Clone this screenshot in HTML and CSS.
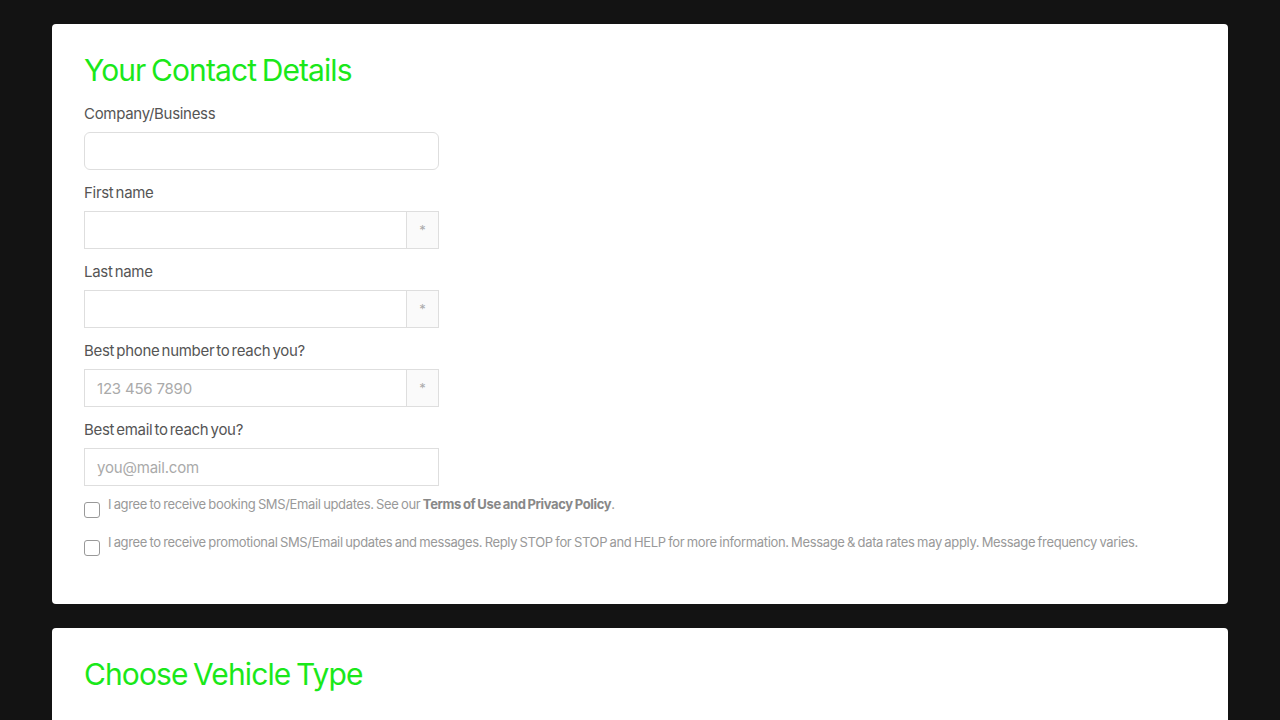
FILE: index.html
```html
<!DOCTYPE html>
<html lang="en">
<head>
    <meta charset="UTF-8">
    <meta name="viewport" content="width=device-width, initial-scale=1.0">
    <title>Booking</title>
    <link rel="stylesheet" href="styles.css">
</head>
<body>
    <div class="page">
        <section class="kaart">
            <h2 class="kop">Your Contact Details</h2>

            <div class="veld">
                <label class="label">Company/Business</label>
                <div class="invoer rond"><input type="text"></div>
            </div>

            <div class="veld">
                <label class="label">First name</label>
                <div class="invoer"><input type="text"><span class="ster">*</span></div>
            </div>

            <div class="veld">
                <label class="label">Last name</label>
                <div class="invoer"><input type="text"><span class="ster">*</span></div>
            </div>

            <div class="veld">
                <label class="label">Best phone number to reach you?</label>
                <div class="invoer"><input type="text" placeholder="123 456 7890"><span class="ster">*</span></div>
            </div>

            <div class="veld laatste">
                <label class="label">Best email to reach you?</label>
                <div class="invoer"><input type="text" placeholder="you@mail.com"></div>
            </div>

            <div class="vinkje">
                <span class="box"></span>
                <p>I agree to receive booking SMS/Email updates. See our <b>Terms of Use and Privacy Policy</b>.</p>
            </div>
            <div class="vinkje">
                <span class="box"></span>
                <p>I agree to receive promotional SMS/Email updates and messages. Reply STOP for STOP and HELP for more information. Message &amp; data rates may apply. Message frequency varies.</p>
            </div>
        </section>

        <section class="kaart">
            <h2 class="kop">Choose Vehicle Type</h2>
        </section>
    </div>
</body>
</html>
```

FILE: styles.css
```css
html, body {
    margin: 0;
    background: #131313;
    font-family: Inter, "Noto Sans", sans-serif;
}

.page {
    padding: 24px 52px;
    display: flex;
    flex-direction: column;
    gap: 24px;
}

.kaart {
    background: #fff;
    border-radius: 4px;
    padding: 26px 32px 34px;
}

.kop {
    margin: 0 0 14px;
    font-size: 30px;
    line-height: 40px;
    font-weight: 400;
    letter-spacing: -0.9px;
    word-spacing: -2px;
    color: #1ae81a;
}

.veld {
    margin-bottom: 13px;
    width: 355px;
}

.veld.laatste {
    margin-bottom: 0;
}

.label {
    display: block;
    font-size: 15px;
    line-height: 20px;
    color: #555;
    letter-spacing: -0.3px;
    word-spacing: -1.8px;
    margin-bottom: 8px;
}

.invoer {
    display: flex;
    height: 38px;
    box-sizing: border-box;
    border: 1px solid #dedede;
}

.invoer.rond {
    border-radius: 6px;
}

.invoer input {
    flex: 1;
    min-width: 0;
    border: 0;
    outline: 0;
    background: transparent;
    padding: 0 12px;
    font-family: inherit;
    font-size: 15px;
    letter-spacing: -0.2px;
    color: #555;
}

.invoer input::placeholder {
    color: #aaa;
}

.ster {
    width: 31px;
    border-left: 1px solid #dedede;
    background: #fafafa;
    color: #aaa;
    font-size: 13px;
    display: flex;
    align-items: center;
    justify-content: center;
}

.vinkje {
    display: flex;
    gap: 8px;
    margin-top: 8px;
}

.vinkje + .vinkje {
    margin-top: 14px;
}

.vinkje:last-child {
    margin-bottom: 14px;
}

.box {
    flex: none;
    box-sizing: border-box;
    width: 16px;
    height: 16px;
    margin-top: 8px;
    border: 1px solid #999;
    border-radius: 3px;
}

.vinkje p {
    margin: 0;
    font-size: 13px;
    line-height: 20px;
    color: #999;
    letter-spacing: -0.35px;
    word-spacing: -0.8px;
}

.vinkje b {
    color: #888;
    font-weight: 700;
}
```
